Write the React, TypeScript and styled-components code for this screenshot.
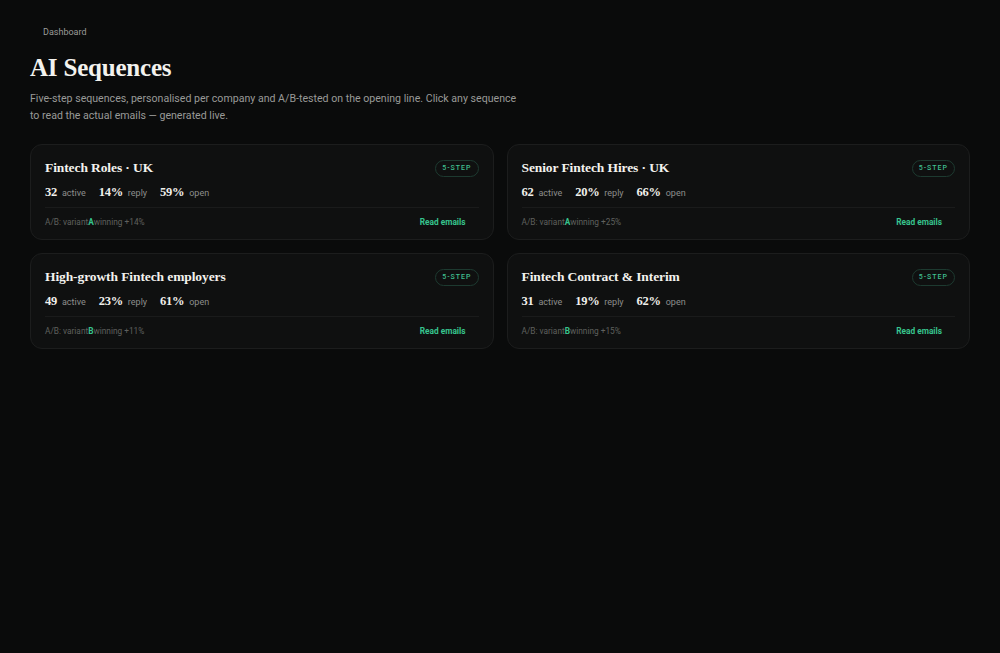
import styled, { createGlobalStyle } from "styled-components";

interface Sequence {
    id: number;
    title: string;
    active: number;
    reply: number;
    open: number;
    variant: "A" | "B";
    lift: number;
}

const sequences: Sequence[] = [
    {id: 1, title: "Fintech Roles · UK", active: 32, reply: 14, open: 59, variant: "A", lift: 14},
    {id: 2, title: "Senior Fintech Hires · UK", active: 62, reply: 20, open: 66, variant: "A", lift: 25},
    {id: 3, title: "High-growth Fintech employers", active: 49, reply: 23, open: 61, variant: "B", lift: 11},
    {id: 4, title: "Fintech Contract & Interim", active: 31, reply: 19, open: 62, variant: "B", lift: 15},
];

export default function App() {
    return <>
        <GlobalStyle/>
        <Page>
            <Breadcrumb>Dashboard</Breadcrumb>
            <Heading>AI Sequences</Heading>
            <Intro>
                Five-step sequences, personalised per company and A/B-tested on the opening line. Click any sequence
                to read the actual emails — generated live.
            </Intro>
            <Grid>
                {sequences.map(s => <Card key={s.id}>
                    <CardHead>
                        <CardTitle>{s.title}</CardTitle>
                        <StepBadge>5-STEP</StepBadge>
                    </CardHead>
                    <Stats>
                        <Stat><StatValue>{s.active}</StatValue><StatLabel>active</StatLabel></Stat>
                        <Stat><StatValue>{s.reply}%</StatValue><StatLabel>reply</StatLabel></Stat>
                        <Stat><StatValue>{s.open}%</StatValue><StatLabel>open</StatLabel></Stat>
                    </Stats>
                    <CardFoot>
                        <AbText>A/B: variant<Variant>{s.variant}</Variant>winning +{s.lift}%</AbText>
                        <ReadLink>Read emails</ReadLink>
                    </CardFoot>
                </Card>)}
            </Grid>
        </Page>
    </>
}

const GlobalStyle = createGlobalStyle`
    * {
        box-sizing: border-box;
    }

    html, body {
        margin: 0;
        background: #0a0b0b;
        color: #ececea;
        font-family: Roboto, "Noto Sans", sans-serif;
    }
`

const Page = styled.main`
    min-height: 653px;
    padding: 27px 30px 40px 30px;
`

const Breadcrumb = styled.div`
    padding-left: 13px;
    font-size: 9px;
    color: #9a9b99;
    margin-bottom: 15px;
`

const Heading = styled.h1`
    margin: 0 0 6px 0;
    font-family: "Liberation Serif", serif;
    font-weight: 700;
    font-size: 25px;
    line-height: 32px;
    letter-spacing: -0.2px;
    color: #f3f2ee;
`

const Intro = styled.p`
    margin: 0 0 20px 0;
    max-width: 492px;
    font-size: 10.6px;
    line-height: 17px;
    color: #999a98;
`

const Grid = styled.section`
    display: grid;
    grid-template-columns: 1fr 1fr;
    gap: 13px;
`

const Card = styled.article`
    display: flex;
    flex-direction: column;
    height: 96px;
    padding: 14px 14px 0 14px;
    background: #0f1010;
    border: 1px solid #1c1d1d;
    border-radius: 12px;
`

const CardHead = styled.div`
    display: flex;
    align-items: center;
    justify-content: space-between;
    height: 18px;
`

const CardTitle = styled.h2`
    margin: 0;
    font-family: "Liberation Serif", serif;
    font-weight: 700;
    font-size: 13.5px;
    letter-spacing: -0.1px;
    color: #f3f2ee;
`

const StepBadge = styled.span`
    display: flex;
    align-items: center;
    height: 17px;
    padding: 0 6px;
    border: 1px solid #1d3a30;
    border-radius: 9px;
    font-size: 7px;
    font-weight: 500;
    letter-spacing: 1px;
    color: #3fbf8f;
`

const Stats = styled.div`
    display: flex;
    align-items: baseline;
    gap: 13px;
    margin-top: 8px;
    padding-bottom: 7px;
    border-bottom: 1px solid #1a1b1b;
`

const Stat = styled.div`
    display: flex;
    align-items: baseline;
    gap: 5px;
`

const StatValue = styled.span`
    font-family: "Liberation Serif", serif;
    font-weight: 700;
    font-size: 12.5px;
    letter-spacing: -0.3px;
    color: #f0efeb;
`

const StatLabel = styled.span`
    font-size: 9px;
    color: #8d8e8c;
`

const CardFoot = styled.div`
    display: flex;
    align-items: center;
    justify-content: space-between;
    padding: 0 13px 0 0;
    height: 27px;
`

const AbText = styled.span`
    font-size: 8.3px;
    color: #5f605e;
`

const Variant = styled.b`
    color: #37c48e;
    font-weight: 700;
`

const ReadLink = styled.a`
    font-size: 8.3px;
    font-weight: 700;
    color: #37c48e;
    cursor: pointer;
`
